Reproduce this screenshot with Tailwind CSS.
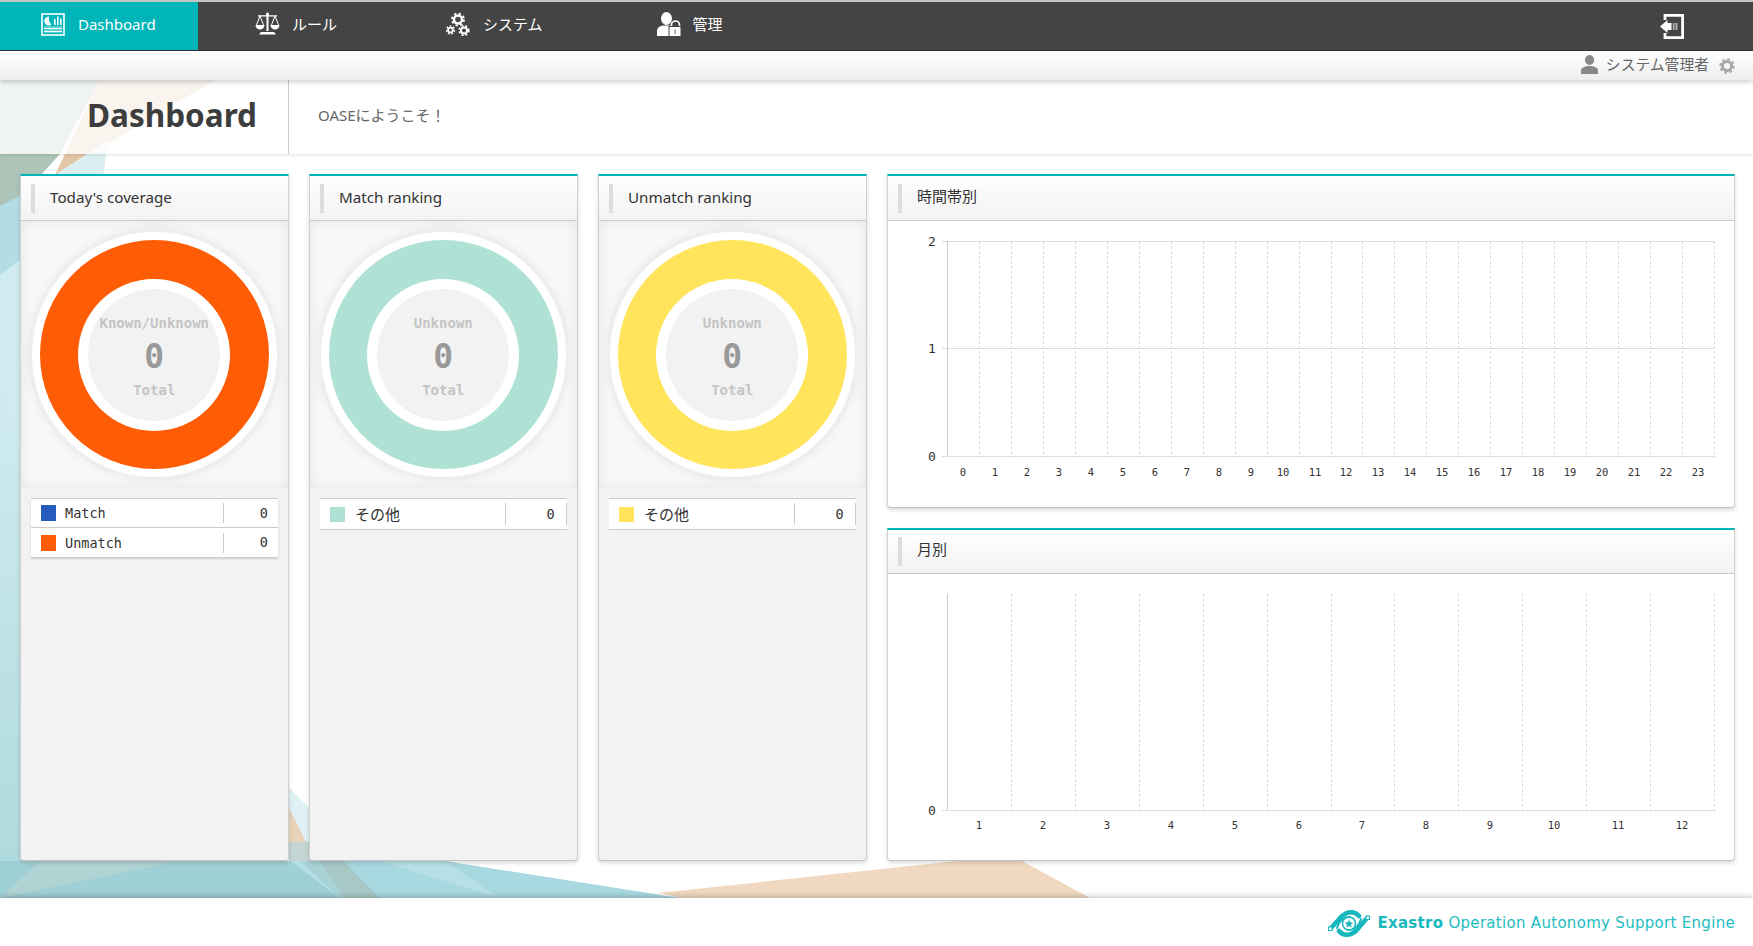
<!DOCTYPE html>
<html lang="ja">

<head>
    <meta charset="UTF-8">
    <title>Dashboard</title>
    <script src="https://cdn.jsdelivr.net/npm/@tailwindcss/browser@4"></script>
</head>

<body class="relative h-[946px] w-[1753px] overflow-hidden bg-white font-['Noto_Sans','Noto_Sans_CJK_JP',sans-serif] text-[#333]">

    <!-- background polygons -->
    <svg class="absolute left-0 top-[80px] h-[818px] w-[1753px]" viewBox="0 80 1753 818">
        <defs>
            <linearGradient id="strip" x1="0" y1="0" x2="0" y2="1">
                <stop offset="0" stop-color="#d0ebef" />
                <stop offset="1" stop-color="#aedade" />
            </linearGradient>
        </defs>
        <polygon points="0,80 100,80 60,154 20,198 0,206" fill="#adc5b8" />
        <polygon points="100,80 215,80 55,175" fill="#e3c6a8" />
        <polygon points="108,140 100,200 20,260 55,175" fill="#dcf0f3" />
        <polygon points="0,206 40,185 40,870 0,870" fill="#b2dde4" />
        <polygon points="0,275 40,245 40,520 0,393" fill="#d0ebef" />
        <polygon points="0,393 40,520 40,870 0,870" fill="url(#strip)" />
        <polygon points="0,861 344,861 344,898 0,898" fill="#9ed0d5" />
        <polygon points="0,898 40,861 180,861" fill="#b0d3d3" />
        <polygon points="289,788 312,810 312,861 289,861" fill="#dff1f4" />
        <polygon points="289,808 310,850 310,861 289,861" fill="#e8d3b8" />
        <polygon points="289,842 310,842 310,861 289,861" fill="#c3d6d3" />
        <polygon points="290,861 444,861 666,896 681,898 340,898" fill="#b3dfe6" />
        <polygon points="340,861 380,898 340,898 300,861" fill="#a8d2d5" />
        <polygon points="320,861 344,861 380,898 345,898" fill="#a6c8c6" />
        <polygon points="380,898 344,861 444,861 666,896 681,898" fill="#a8d8e0" />
        <polygon points="444,861 500,898 380,861" fill="#b7e0e6" />
        <polygon points="658,893 957,861 1022,861 1090,898 681,898" fill="#f0d9c0" />
    </svg>

    <div class="relative flex h-full flex-col">
        <div class="h-[2px] bg-[#c4c4c4]"></div>

        <!-- nav -->
        <header class="flex h-[49px] items-start justify-between border-b border-[#333] bg-[#444] text-[15px] text-white">
            <nav class="flex h-full">
                <a class="flex h-full w-[198px] items-center gap-[13px] bg-[#00b5b8] pb-[4px] pl-[41px] text-[15px]">
                    <svg class="h-[23px] w-[24px]" viewBox="0 0 24 23">
                        <rect x="1" y="1" width="22" height="21" fill="none" stroke="#fff" stroke-width="1.6" />
                        <rect x="3" y="13" width="18" height="7" fill="#fff" fill-opacity="0.35" />
                        <path d="M3 15.5H21M3 18.5H21" stroke="#fff" stroke-width="1.2" />
                        <path d="M8 3.5A4.5 4.5 0 1 0 10.5 11.5L8 8Z" fill="#fff" />
                        <path d="M13 6h1.6v6H13zM16 3.5h1.6V12H16zM19 5.5h1.6V12H19z" fill="#fff" />
                    </svg>
                    Dashboard
                </a>
                <a class="flex h-full items-center gap-3 pb-[4px] pl-[57px] pr-[52px]">
                    <svg class="h-[24px] w-[25px]" viewBox="0 0 25 24">
                        <path d="M11.5 2h2v17h-2zM3 3.2h19v1.4H3z" fill="#fff" />
                        <path d="M5 4L1.5 13M5 4l3.5 9M20 4l-3.5 9M20 4l3.5 9" stroke="#fff" stroke-width="1" fill="none" />
                        <path d="M0.5 13h9a4.5 4.5 0 0 1-9 0zM15.5 13h9a4.5 4.5 0 0 1-9 0z" fill="#fff" />
                        <path d="M6 20h13l2 2.5H4z" fill="#fff" />
                        <circle cx="12.5" cy="2" r="1.5" fill="#fff" />
                    </svg>
                    ルール
                </a>
                <a class="flex h-full items-center gap-[13px] pb-[4px] pl-[57px] pr-[57px]">
                    <svg class="h-[24px] w-[24px]" viewBox="0 0 24 24">
                        <g fill="none" stroke="#fff">
                            <circle cx="12" cy="7.5" r="4" stroke-width="2.4" />
                            <circle cx="12" cy="7.5" r="6" stroke-width="1.8" stroke-dasharray="2.4 2.3" />
                            <circle cx="4.5" cy="18" r="2.4" stroke-width="1.8" />
                            <circle cx="4.5" cy="18" r="4" stroke-width="1.4" stroke-dasharray="1.8 1.7" />
                            <circle cx="18" cy="18.5" r="3" stroke-width="2" />
                            <circle cx="18" cy="18.5" r="4.8" stroke-width="1.6" stroke-dasharray="2 1.9" />
                        </g>
                    </svg>
                    システム
                </a>
                <a class="flex h-full items-center gap-3 pb-[4px] pl-[57px]">
                    <svg class="h-[25px] w-[24px]" viewBox="0 0 24 25">
                        <ellipse cx="9.5" cy="6.5" rx="5.5" ry="6.5" fill="#fff" />
                        <path d="M0 24V19C0 15.5 3 14 6 13.5H13C15 14 16 15 16 17V24Z" fill="#fff" />
                        <path d="M14.5 15V13a4 4 0 0 1 8 0v2" fill="none" stroke="#fff" stroke-width="1.6" />
                        <rect x="12" y="14.5" width="12" height="10" fill="#fff" stroke="#444" stroke-width="1" />
                        <rect x="17.2" y="17.5" width="1.8" height="4.5" fill="#b9a0c8" />
                    </svg>
                    管理
                </a>
            </nav>
            <svg class="mr-[69px] mt-[12px] h-[25px] w-[24px]" viewBox="0 0 24 25">
                <path d="M5 6V1.4H22.6V23.6H5V19" fill="none" stroke="#fff" stroke-width="2.8" />
                <path d="M0 12.5L7.5 6V9H11V16H7.5V19Z" fill="#fff" />
                <path d="M11 9h6.5v7H11z" fill="#fff" fill-opacity="0.55" />
                <path d="M12.5 9v7M15 9v7" stroke="#444" stroke-width="0.8" />
            </svg>
        </header>

        <!-- user bar -->
        <div class="relative z-20 flex h-[29px] items-center justify-end bg-gradient-to-b from-white to-[#eee] pb-[2px] pr-[18px] text-[14.8px] text-[#666] shadow-[0_2px_5px_rgba(0,0,0,0.2)]">
            <svg class="mr-[8px] h-[19px] w-[17px]" viewBox="0 0 17 19">
                <ellipse cx="8.5" cy="5" rx="4.6" ry="5" fill="#888" />
                <path d="M0 19V15.5C0 12.5 4 11 8.5 11S17 12.5 17 15.5V19Z" fill="#888" />
            </svg>
            <span class="mr-[10px] leading-none">システム管理者</span>
            <svg class="mt-[2px] h-[16px] w-[16px]" viewBox="0 0 16 16">
                <circle cx="8" cy="8" r="4.6" fill="none" stroke="#a8a8a8" stroke-width="3" />
                <circle cx="8" cy="8" r="6.8" fill="none" stroke="#a8a8a8" stroke-width="2" stroke-dasharray="2.7 2.64" />
            </svg>
        </div>

        <!-- title row -->
        <div class="relative z-10 flex h-[74px] bg-white/80 shadow-[0_1px_3px_rgba(0,0,0,0.12)]">
            <h1 class="w-[289px] border-r border-[#ccc] pr-[31px] text-right text-[31.5px] font-bold leading-[69px] text-[#3d3d3d]">Dashboard</h1>
            <p class="pl-[29px] text-[15px] leading-[71px] text-[#666]">OASEにようこそ！</p>
        </div>

        <!-- panels -->
        <main class="flex h-[744px] gap-[20.5px] pl-[20px] pr-[18px] pt-[20px]">

            <section class="flex h-[687px] w-[268.5px] flex-col rounded-b-[4px] border-x border-b border-t-2 border-x-[#d0d0d0] border-b-[#c4c4c4] border-t-[#00b5b8] bg-[#f2f2f2] shadow-[0_2px_4px_rgba(0,0,0,0.15)]">
                <div class="flex h-[45px] items-center border-b border-[#ccc] bg-gradient-to-b from-white to-[#f2f2f2] pl-[10px] text-[15.2px] text-[#333]">
                    <span class="mr-[15px] h-[29px] w-[4px] bg-[#ddd]"></span><span class="mb-[2px]">Today's coverage</span>
                </div>
                <div class="flex h-[267px] items-center justify-center bg-[#f8f8f8] shadow-[inset_0_0_14px_rgba(0,0,0,0.08)]">
                    <div class="flex h-[245px] w-[245px] items-center justify-center rounded-full bg-white shadow-[0_0_0_4px_#eee,0_0_10px_4px_rgba(0,0,0,0.05)]">
                        <div class="flex h-[229px] w-[229px] items-center justify-center rounded-full bg-[#ff5c06]">
                            <div class="flex h-[152px] w-[152px] items-center justify-center rounded-full bg-white">
                                <div class="flex h-[132px] w-[132px] flex-col items-center rounded-full bg-[#f2f2f2] pt-[25px] font-['DejaVu_Sans_Mono',monospace] font-bold">
                                    <span class="text-[14px] leading-[18px] text-[#c4c4c4]">Known/Unknown</span>
                                    <span class="text-[33px] leading-[49px] text-[#999]">0</span>
                                    <span class="text-[14px] leading-[18px] text-[#c4c4c4]">Total</span>
                                </div>
                            </div>
                        </div>
                    </div>
                </div>
                <div class="mx-[10px] mt-[10px] font-['DejaVu_Sans_Mono',monospace] text-[13.5px] text-[#333] shadow-[0_1px_2px_rgba(0,0,0,0.15)]">
                    <div class="flex h-[30px] items-center border-y border-[#ccc] bg-white pl-[10px]">
                        <span class="mr-[9px] h-[16px] w-[15px] bg-[#255cbd]"></span>
                        <span class="w-[159px] border-r border-[#ccc] leading-[20px]">Match</span>
                        <span class="w-[44px] text-right">0</span>
                    </div>
                    <div class="flex h-[30px] items-center border-b border-[#ccc] bg-white pl-[10px]">
                        <span class="mr-[9px] h-[16px] w-[15px] bg-[#ff5c06]"></span>
                        <span class="w-[159px] border-r border-[#ccc] leading-[20px]">Unmatch</span>
                        <span class="w-[44px] text-right">0</span>
                    </div>
                </div>
            </section>

            <section class="flex h-[687px] w-[268.5px] flex-col rounded-b-[4px] border-x border-b border-t-2 border-x-[#d0d0d0] border-b-[#c4c4c4] border-t-[#00b5b8] bg-[#f2f2f2] shadow-[0_2px_4px_rgba(0,0,0,0.15)]">
                <div class="flex h-[45px] items-center border-b border-[#ccc] bg-gradient-to-b from-white to-[#f2f2f2] pl-[10px] text-[15.2px] text-[#333]">
                    <span class="mr-[15px] h-[29px] w-[4px] bg-[#ddd]"></span><span class="mb-[2px]">Match ranking</span>
                </div>
                <div class="flex h-[267px] items-center justify-center bg-[#f8f8f8] shadow-[inset_0_0_14px_rgba(0,0,0,0.08)]">
                    <div class="flex h-[245px] w-[245px] items-center justify-center rounded-full bg-white shadow-[0_0_0_4px_#eee,0_0_10px_4px_rgba(0,0,0,0.05)]">
                        <div class="flex h-[229px] w-[229px] items-center justify-center rounded-full bg-[#afe2d5]">
                            <div class="flex h-[152px] w-[152px] items-center justify-center rounded-full bg-white">
                                <div class="flex h-[132px] w-[132px] flex-col items-center rounded-full bg-[#f2f2f2] pt-[25px] font-['DejaVu_Sans_Mono',monospace] font-bold">
                                    <span class="text-[14px] leading-[18px] text-[#c4c4c4]">Unknown</span>
                                    <span class="text-[33px] leading-[49px] text-[#999]">0</span>
                                    <span class="text-[14px] leading-[18px] text-[#c4c4c4]">Total</span>
                                </div>
                            </div>
                        </div>
                    </div>
                </div>
                <div class="mx-[10px] mt-[10px] flex h-[32px] items-center border-y border-[#ccc] bg-white pl-[10px] text-[15px] text-[#333]">
                    <span class="mr-[10px] h-[15px] w-[15px] bg-[#afe2d5]"></span>
                    <span class="w-[151px] border-r border-[#ccc] leading-[22px]">その他</span>
                    <span class="w-[61px] border-r border-[#ccc] pr-[11px] text-right font-['DejaVu_Sans_Mono',monospace] text-[13.5px] leading-[22px]">0</span>
                </div>
            </section>

            <section class="flex h-[687px] w-[268.5px] flex-col rounded-b-[4px] border-x border-b border-t-2 border-x-[#d0d0d0] border-b-[#c4c4c4] border-t-[#00b5b8] bg-[#f2f2f2] shadow-[0_2px_4px_rgba(0,0,0,0.15)]">
                <div class="flex h-[45px] items-center border-b border-[#ccc] bg-gradient-to-b from-white to-[#f2f2f2] pl-[10px] text-[15.2px] text-[#333]">
                    <span class="mr-[15px] h-[29px] w-[4px] bg-[#ddd]"></span><span class="mb-[2px]">Unmatch ranking</span>
                </div>
                <div class="flex h-[267px] items-center justify-center bg-[#f8f8f8] shadow-[inset_0_0_14px_rgba(0,0,0,0.08)]">
                    <div class="flex h-[245px] w-[245px] items-center justify-center rounded-full bg-white shadow-[0_0_0_4px_#eee,0_0_10px_4px_rgba(0,0,0,0.05)]">
                        <div class="flex h-[229px] w-[229px] items-center justify-center rounded-full bg-[#ffe45c]">
                            <div class="flex h-[152px] w-[152px] items-center justify-center rounded-full bg-white">
                                <div class="flex h-[132px] w-[132px] flex-col items-center rounded-full bg-[#f2f2f2] pt-[25px] font-['DejaVu_Sans_Mono',monospace] font-bold">
                                    <span class="text-[14px] leading-[18px] text-[#c4c4c4]">Unknown</span>
                                    <span class="text-[33px] leading-[49px] text-[#999]">0</span>
                                    <span class="text-[14px] leading-[18px] text-[#c4c4c4]">Total</span>
                                </div>
                            </div>
                        </div>
                    </div>
                </div>
                <div class="mx-[10px] mt-[10px] flex h-[32px] items-center border-y border-[#ccc] bg-white pl-[10px] text-[15px] text-[#333]">
                    <span class="mr-[10px] h-[15px] w-[15px] bg-[#ffe45c]"></span>
                    <span class="w-[151px] border-r border-[#ccc] leading-[22px]">その他</span>
                    <span class="w-[61px] border-r border-[#ccc] pr-[11px] text-right font-['DejaVu_Sans_Mono',monospace] text-[13.5px] leading-[22px]">0</span>
                </div>
            </section>

            <div class="flex flex-1 flex-col gap-[20px]">
                <section class="flex h-[334px] flex-col rounded-b-[4px] border-x border-b border-t-2 border-x-[#d0d0d0] border-b-[#c4c4c4] border-t-[#00b5b8] bg-white shadow-[0_2px_4px_rgba(0,0,0,0.15)]">
                    <div class="flex h-[45px] shrink-0 items-center border-b border-[#ccc] bg-gradient-to-b from-white to-[#f2f2f2] pl-[10px] text-[15px] text-[#333]">
                        <span class="mr-[15px] h-[29px] w-[4px] bg-[#ddd]"></span><span class="mb-[4px]">時間帯別</span>
                    </div>
                    <svg class="h-[286px] w-full font-['DejaVu_Sans_Mono',monospace]" viewBox="888 221 846 286">
                        <path d="M979 241V458M1011 241V458M1043 241V458M1075 241V458M1107 241V458M1139 241V458M1171 241V458M1203 241V458M1235 241V458M1267 241V458M1299 241V458M1331 241V458M1362 241V458M1394 241V458M1426 241V458M1458 241V458M1490 241V458M1522 241V458M1554 241V458M1586 241V458M1618 241V458M1650 241V458M1682 241V458M1714 241V458" stroke="#ddd" stroke-dasharray="3 2" shape-rendering="crispEdges" />
                        <path d="M942 241.5H1714M942 348.5H1714M942 456.5H1714" stroke="#ddd" shape-rendering="crispEdges" />
                        <path d="M947.5 241V456" stroke="#ccc" shape-rendering="crispEdges" />
                        <g font-size="13" fill="#333" text-anchor="middle">
                            <text x="932" y="246">2</text>
                            <text x="932" y="353">1</text>
                            <text x="932" y="461">0</text>
                        </g>
                        <g font-size="10.5" fill="#333" text-anchor="middle">
                            <text x="963" y="476">0</text><text x="995" y="476">1</text><text x="1027" y="476">2</text><text x="1059" y="476">3</text><text x="1091" y="476">4</text><text x="1123" y="476">5</text><text x="1155" y="476">6</text><text x="1187" y="476">7</text><text x="1219" y="476">8</text><text x="1251" y="476">9</text><text x="1283" y="476">10</text><text x="1315" y="476">11</text><text x="1346" y="476">12</text><text x="1378" y="476">13</text><text x="1410" y="476">14</text><text x="1442" y="476">15</text><text x="1474" y="476">16</text><text x="1506" y="476">17</text><text x="1538" y="476">18</text><text x="1570" y="476">19</text><text x="1602" y="476">20</text><text x="1634" y="476">21</text><text x="1666" y="476">22</text><text x="1698" y="476">23</text>
                        </g>
                    </svg>
                </section>
                <section class="flex h-[333px] flex-col rounded-b-[4px] border-x border-b border-t-2 border-x-[#d0d0d0] border-b-[#c4c4c4] border-t-[#00b5b8] bg-white shadow-[0_2px_4px_rgba(0,0,0,0.15)]">
                    <div class="flex h-[44px] shrink-0 items-center border-b border-[#ccc] bg-gradient-to-b from-white to-[#f2f2f2] pl-[10px] text-[15px] text-[#333]">
                        <span class="mr-[15px] h-[29px] w-[4px] bg-[#ddd]"></span><span class="mb-[4px]">月別</span>
                    </div>
                    <svg class="h-[286px] w-full font-['DejaVu_Sans_Mono',monospace]" viewBox="888 574 846 286">
                        <path d="M1011 594V812M1075 594V812M1139 594V812M1203 594V812M1267 594V812M1331 594V812M1394 594V812M1458 594V812M1522 594V812M1586 594V812M1650 594V812M1714 594V812" stroke="#ddd" stroke-dasharray="3 2" shape-rendering="crispEdges" />
                        <path d="M942 810.5H1714" stroke="#ddd" shape-rendering="crispEdges" />
                        <path d="M947.5 594V810" stroke="#ccc" shape-rendering="crispEdges" />
                        <text x="932" y="815" font-size="13" fill="#333" text-anchor="middle">0</text>
                        <g font-size="10.5" fill="#333" text-anchor="middle">
                            <text x="979" y="829">1</text><text x="1043" y="829">2</text><text x="1107" y="829">3</text><text x="1171" y="829">4</text><text x="1235" y="829">5</text><text x="1299" y="829">6</text><text x="1362" y="829">7</text><text x="1426" y="829">8</text><text x="1490" y="829">9</text><text x="1554" y="829">10</text><text x="1618" y="829">11</text><text x="1682" y="829">12</text>
                        </g>
                    </svg>
                </section>
            </div>
        </main>

        <!-- footer -->
        <footer class="relative z-10 flex h-[48px] items-center justify-end gap-[7px] bg-white pt-[3px] pr-[18px] font-['DejaVu_Sans',sans-serif] text-[15px] tracking-[0.3px] text-[#1cbcc0] shadow-[0_-2px_5px_rgba(0,0,0,0.2)]">
            <svg class="h-[29px] w-[42px]" viewBox="0 0 42 29">
                <g fill="none" stroke="#17b8bd" stroke-linecap="round">
                    <path d="M3 19L14 7C20 2 27 2 31 7" stroke-width="4.5" />
                    <path d="M39 9L28 22C22 27 15 27 11 22" stroke-width="4.5" />
                    <path d="M9 19C11 12 16 8 22 8" stroke-width="2" />
                    <path d="M33 10C31 17 26 21 20 21" stroke-width="2" />
                </g>
                <circle cx="21" cy="14.5" r="6.5" fill="#fff" stroke="#17b8bd" stroke-width="1.5" />
                <path d="M21 10.5l1.2 2.7 3 .3-2.2 2 .7 3-2.7-1.6-2.7 1.6.7-3-2.2-2 3-.3z" fill="#17b8bd" />
                <rect x="0.5" y="18" width="3.5" height="3.5" fill="#fff" stroke="#17b8bd" />
                <rect x="38" y="7" width="3.5" height="3.5" fill="#fff" stroke="#17b8bd" />
            </svg>
            <span><b class="font-bold text-[#17b8bd]">Exastro</b> Operation Autonomy Support Engine</span>
        </footer>
    </div>
</body>

</html>
